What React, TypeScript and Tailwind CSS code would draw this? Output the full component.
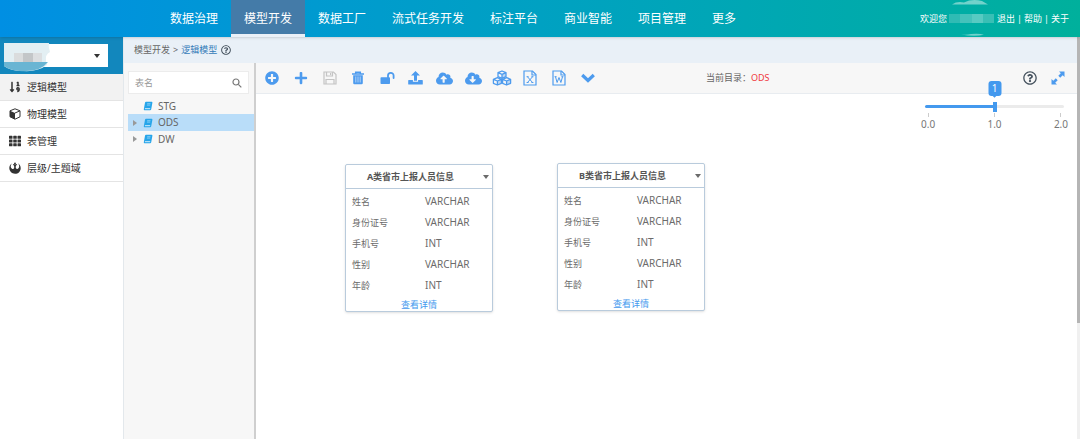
import React, { useState } from 'react';
import {
  FaCloudDownloadAlt,
  FaCloudUploadAlt,
  FaPlus,
  FaPlusCircle,
  FaRebel,
  FaRegQuestionCircle,
  FaSortNumericDown,
  FaTh,
} from 'react-icons/fa';

const navItems = ['数据治理', '模型开发', '数据工厂', '流式任务开发', '标注平台', '商业智能', '项目管理', '更多'];

const menuItems = [
  { label: '逻辑模型', icon: <FaSortNumericDown size={12} /> },
  { label: '物理模型', icon: <CubeIcon /> },
  { label: '表管理', icon: <FaTh size={12} /> },
  { label: '层级/主题域', icon: <FaRebel size={12} /> },
];

const treeItems = [
  { label: 'STG', expandable: false },
  { label: 'ODS', expandable: true },
  { label: 'DW', expandable: true },
];

const fields = [
  { name: '姓名', type: 'VARCHAR' },
  { name: '身份证号', type: 'VARCHAR' },
  { name: '手机号', type: 'INT' },
  { name: '性别', type: 'VARCHAR' },
  { name: '年龄', type: 'INT' },
];

function CubeIcon() {
  return (
    <svg viewBox="0 0 12 12" className="size-[12px]" strokeLinejoin="round">
      <path d="M6 .8l5 2v6L6 11.200l-5-2.400v-6z" fill="#fff" stroke="currentColor" strokeWidth="1" />
      <path d="M1 2.800l5 2.200v6.200L1 8.800z" fill="currentColor" />
      <path d="M6 5l5-2.200" stroke="currentColor" strokeWidth="1" />
    </svg>
  );
}

function SaveIcon() {
  return (
    <svg viewBox="0 0 14 14" className="size-[14px]" fill="none" stroke="currentColor" strokeWidth="1.2">
      <path d="M1 1h9.5L13 3.5V13H1z" />
      <path d="M3.5 1v4h6V1M7.6 2v2M3 13V8.5h8V13" />
    </svg>
  );
}

function TrashIcon() {
  return (
    <svg viewBox="0 0 14 14" className="size-[14px]" fill="none" stroke="currentColor">
      <path d="M1 3h12M4.7 3V1.3h4.6V3" strokeWidth="1.5" />
      <path d="M2.2 4.3h9.6V12a1.2 1.2 0 0 1-1.2 1.2H3.4A1.2 1.2 0 0 1 2.2 12z" fill="currentColor" stroke="none" />
      <path d="M4.8 5.5v6M7 5.5v6M9.2 5.5v6" stroke="#c9e0fb" strokeWidth="0.8" />
    </svg>
  );
}

function UnlockIcon() {
  return (
    <svg viewBox="0 0 15 14" className="h-[14px] w-[15px]" fill="none">
      <rect x="0.5" y="6.2" width="9.5" height="6.8" rx="0.8" fill="currentColor" />
      <path d="M8 6.5V4.600a2.800 2.800 0 0 1 5.600 0V7" stroke="currentColor" strokeWidth="1.8" strokeLinecap="round" />
    </svg>
  );
}

function UploadIcon() {
  return (
    <svg viewBox="0 0 15 14" className="h-[14px] w-[15px]" fill="currentColor">
      <path d="M7.5 0l4.500 4.600H9V9.800H6V4.600H3z" />
      <path d="M.8 9h4.100v1.800h5.200V9h4.100a.6.6 0 0 1 .6.6v3.400a.6.6 0 0 1-.6.6H.8a.6.6 0 0 1-.6-.6V9.600A.6.6 0 0 1 .8 9z" />
    </svg>
  );
}

function CubesIcon() {
  return (
    <svg viewBox="0 0 20 16" className="h-[16px] w-[20px]" fill="none" stroke="currentColor" strokeWidth="1.3" strokeLinejoin="round">
      <path d="M10 1l4 1.700v4L10 8.400 6 6.700v-4zM6 2.700l4 1.700 4-1.700M10 4.400v4" />
      <path d="M5.400 7.600l4 1.700v4l-4 1.700-4-1.700v-4zM1.400 9.300l4 1.700 4-1.700M5.400 11v4" />
      <path d="M14.600 7.600l4 1.700v4l-4 1.700-4-1.700v-4zM10.600 9.300l4 1.700 4-1.700M14.600 11v4" />
      <path d="M10 4.400l4-1.700v4l-4 1.700zM5.400 11l4-1.700v4l-4 1.700zM14.600 11l4-1.700v4l-4 1.700z" fill="currentColor" fillOpacity="0.35" stroke="none" />
    </svg>
  );
}

function FileIcon({ mark }: { mark: 'excel' | 'word' }) {
  return (
    <svg viewBox="0 0 14 16" className="h-[16px] w-[14px]" fill="none" stroke="currentColor" strokeWidth="1.2">
      <path d="M1 1h8.500L13 4.500V15H1z" />
      <path d="M9 1v4h4" />
      {mark === 'excel' ? (
        <path d="M4.500 6.800l5 5.700M9.500 6.800l-5 5.700M3.600 6.700h2M8.400 6.700h2M3.600 12.500h2M8.400 12.500h2" strokeWidth="1" />
      ) : (
        <path d="M3.500 6.800l1.600 5.700L7 7.500l1.900 5 1.600-5.700M2.600 6.700h2M9.400 6.700h2" strokeWidth="1" />
      )}
    </svg>
  );
}

function ChevronIcon() {
  return (
    <svg viewBox="0 0 14 10" className="h-[10px] w-[14px]" fill="none" stroke="currentColor" strokeWidth="3.2">
      <path d="M1.200 2L7 7.500 12.800 2" />
    </svg>
  );
}

function ExpandIcon() {
  return (
    <svg viewBox="0 0 14 14" className="size-[14px]" fill="currentColor">
      <path d="M8 .5h5.500V6L11.700 4.200 9.200 6.700 7.300 4.800l2.500-2.500zM6 13.500H.5V8l1.800 1.800 2.500-2.500 1.900 1.900-2.500 2.500z" />
    </svg>
  );
}

function BookIcon() {
  return (
    <svg viewBox="0 0 10 10" className="size-[10px] shrink-0">
      <path d="M3 .8h5.700q.9 0 .7.900L8.200 8.300q-.2.900-1.100.9H1.600Q.6 9.200.8 8.200L2 1.700Q2.200.8 3 .8z" fill="#26a5ea" />
      <path d="M1.900 7.700h5.300" stroke="#fff" strokeWidth="0.8" />
      <path d="M4.200 2.700h3.300M3.900 4.100h3.300" stroke="#bfe6fb" strokeWidth="0.6" />
    </svg>
  );
}

function Caret() {
  return (
    <svg viewBox="0 0 6 4" className="h-[4px] w-[6px]" fill="currentColor">
      <path d="M0 0h6L3 4z" />
    </svg>
  );
}

const tools = [
  { label: '新增', icon: <FaPlusCircle size={14} /> },
  { label: '添加', icon: <FaPlus size={14} /> },
  { label: '保存', icon: <SaveIcon />, disabled: true },
  { label: '删除', icon: <TrashIcon /> },
  { label: '解锁', icon: <UnlockIcon /> },
  { label: '上传', icon: <UploadIcon /> },
  { label: '云上传', icon: <FaCloudUploadAlt size={17} /> },
  { label: '云下载', icon: <FaCloudDownloadAlt size={17} /> },
  { label: '模型', icon: <CubesIcon /> },
  { label: '导出Excel', icon: <FileIcon mark="excel" /> },
  { label: '导出Word', icon: <FileIcon mark="word" /> },
  { label: '展开', icon: <ChevronIcon /> },
];

function Header() {
  return (
    <header className="relative z-10 flex h-[37px] shrink-0 justify-between bg-linear-to-r from-[#008fe3] via-[#00a1c2] to-[#00b09c] text-white shadow-sm">
      <nav className="flex pl-[157px] text-[12px]">
        {navItems.map((item) => (
          <a
            key={item}
            href="#"
            className={
              item === '模型开发'
                ? 'flex items-center border-b-3 border-[#eaf0f7] bg-[#447ba8] px-[13px] pt-[3px]'
                : 'flex items-center px-[13px]'
            }
          >
            {item}
          </a>
        ))}
      </nav>
      <div className="relative flex items-center gap-[2px] pr-[11px] text-[9px]">
        <span>欢迎您</span>
        <span className="mr-px flex h-[9px] w-[45px]">
          <span className="flex-1 bg-[#2fbbb4]" />
          <span className="flex-1 bg-[#45c2bb]" />
          <span className="flex-1 bg-[#58cac2]" />
          <span className="flex-1 bg-[#39bfb5]" />
        </span>
        <a href="#">退出</a>|<a href="#">帮助</a>|<a href="#">关于</a>
        <svg viewBox="0 0 38 37" className="absolute top-0 left-[32px] h-[37px] w-[38px]" fill="#72d2cb">
          <path d="M0 4.500Q5 1 12 2.500 20-1.500 30 1l6 3.500z" />
          <path d="M9 34.500q6 .5 10-.5 8-1 13 .8-10 2-23-.3z" />
        </svg>
      </div>
    </header>
  );
}

function Sidebar() {
  return (
    <aside className="w-[123px] shrink-0 bg-white">
      <div className="relative bg-[#1287bd] px-[5px] py-[7px]">
        <select aria-label="项目" className="block h-[23px] w-[103px] appearance-none bg-white text-[9px]" />
        <span className="pointer-events-none absolute top-[17px] right-[23px] text-[#333]">
          <Caret />
        </span>
        <svg viewBox="0 0 46 29" className="pointer-events-none absolute top-[6px] left-[4px] h-[29px] w-[46px]">
          <path d="M0 0h45q-1 4 1 9-5 2-4 10 2 1 1 3-9 7-24 6Q6 28 0 23z" fill="#e3eff3" />
          <path d="M0 19h44q-7 9-22 9Q8 29 0 23z" fill="#69b5d3" />
          <rect x="10" y="10" width="9" height="9" fill="#dadcdd" />
          <rect x="19" y="10" width="10" height="9" fill="#c3c6c8" />
          <rect x="29" y="10" width="9" height="9" fill="#dcdee0" />
        </svg>
      </div>
      <ul className="text-[10px] text-[#333]">
        {menuItems.map((item, i) => (
          <li key={item.label} className="border-b border-[#e4e4e4]">
            <a
              href="#"
              className={
                i === 0
                  ? 'flex h-[26px] items-center gap-[6px] bg-[#f2f2f2] pl-[9px]'
                  : 'flex h-[26px] items-center gap-[6px] pl-[9px]'
              }
            >
              {item.icon}
              {item.label}
            </a>
          </li>
        ))}
      </ul>
    </aside>
  );
}

function TreePanel() {
  return (
    <div className="w-[132px] shrink-0 border-r-2 border-[#cfcfcf] bg-[#f7f7f7] pt-[8px] pl-[4px]">
      <div className="mr-[5px] flex h-[23px] items-center border border-[#ececec] bg-white px-[6px]">
        <input
          aria-label="表名"
          placeholder="表名"
          className="w-0 flex-1 text-[9px] outline-none placeholder:text-[#999]"
        />
        <svg viewBox="0 0 10 10" className="size-[10px]" fill="none" stroke="#777" strokeWidth="1.2">
          <circle cx="4" cy="4" r="3" />
          <path d="M6.300 6.300l3 3" />
        </svg>
      </div>
      <ul className="mt-[4px] text-[10px] text-[#666]">
        {treeItems.map((item) => (
          <li key={item.label}>
            <button
              type="button"
              className={
                item.label === 'ODS'
                  ? 'flex h-[17px] w-full items-center bg-[#b9ddf9] pl-[5px]'
                  : 'flex h-[16px] w-full items-center pl-[5px]'
              }
            >
              <span className="w-[10px] text-[#999]">
                {item.expandable && (
                  <svg viewBox="0 0 4 6" className="h-[6px] w-[4px]" fill="currentColor">
                    <path d="M0 0l4 3-4 3z" />
                  </svg>
                )}
              </span>
              <BookIcon />
              <span className="pl-[5px]">{item.label}</span>
            </button>
          </li>
        ))}
      </ul>
    </div>
  );
}

function Toolbar() {
  return (
    <div className="flex h-[31px] items-center border-b border-[#e8ecf0] bg-[#f7f7f7] pr-[12px] pl-[2px] text-[#4d9bee]">
      <div className="flex h-full w-[344px] shrink-0">
        {tools.map((tool) => (
          <button
            key={tool.label}
            type="button"
            aria-label={tool.label}
            disabled={tool.disabled}
            className="flex flex-1 items-center justify-center disabled:text-[#c4c4c4]"
          >
            {tool.icon}
          </button>
        ))}
      </div>
      <p className="ml-[104px] text-[9px] whitespace-nowrap text-[#666]">
        当前目录：<span className="text-[#f0383d]">ODS</span>
      </p>
      <div className="ml-auto flex items-center gap-[14px]">
        <button type="button" aria-label="帮助" className="text-[#45525e]">
          <FaRegQuestionCircle size={14} />
        </button>
        <button type="button" aria-label="全屏">
          <ExpandIcon />
        </button>
      </div>
    </div>
  );
}

function ZoomSlider() {
  const [value, setValue] = useState(1);
  const percent = (value / 2) * 100;

  return (
    <div className="absolute top-[-13px] right-[9px] w-[147px] text-[10px] text-[#777]">
      <div className="relative mx-[4px] h-[30px]">
        <output
          htmlFor="zoom"
          className="absolute top-0 flex h-[15px] w-[13px] -translate-x-1/2 items-center justify-center rounded-[3px] bg-[#4499ee] text-white"
          style={{ left: `${percent}%` }}
        >
          {value}
          <span className="absolute -bottom-px size-[4px] rotate-45 bg-[#4499ee]" />
        </output>
        <input
          id="zoom"
          type="range"
          min="0"
          max="2"
          step="0.1"
          value={value}
          aria-label="缩放"
          onChange={(e) => setValue(Number(e.target.value))}
          className="absolute top-[24px] left-0 h-[3px] w-full appearance-none rounded-full [&::-webkit-slider-thumb]:h-[10px] [&::-webkit-slider-thumb]:w-[4px] [&::-webkit-slider-thumb]:appearance-none [&::-webkit-slider-thumb]:bg-[#4499ee]"
          style={{ background: `linear-gradient(to right, #4499ee ${percent}%, #ebebeb ${percent}%)` }}
        />
      </div>
      <div className="flex justify-between">
        {['0.0', '1.0', '2.0'].map((mark) => (
          <span key={mark} className="flex flex-col items-center leading-[14px]">
            <span className="mt-[2px] h-[4px] w-px bg-[#ccc]" />
            {mark}
          </span>
        ))}
      </div>
    </div>
  );
}

function TableCard({ title, className }: { title: string; className: string }) {
  return (
    <section className={`absolute w-[148px] rounded-[2px] border border-[#b9cbdc] bg-white text-[#6b6b6b] shadow-sm ${className}`}>
      <div className="flex h-[24px] items-center border-b border-[#b9cbdc] pr-[3px]">
        <h2 className="flex-1 text-center text-[9px] font-bold text-[#555]">{title}</h2>
        <button type="button" aria-label="菜单" className="flex w-[14px] justify-end">
          <Caret />
        </button>
      </div>
      <table className="mt-[2px] w-full">
        <tbody>
          {fields.map((field) => (
            <tr key={field.name} className="h-[21px]">
              <td className="w-[79px] p-0 pl-[6px] text-[9px]">{field.name}</td>
              <td className="p-0 text-[10px]">{field.type}</td>
            </tr>
          ))}
        </tbody>
      </table>
      <a href="#" className="mt-[2px] block h-[13px] text-center text-[9px] leading-[13px] text-[#4499ee]">
        查看详情
      </a>
    </section>
  );
}

export default function App() {
  return (
    <div className="flex min-h-screen flex-col bg-white font-['Noto_Sans','Noto_Sans_CJK_SC',sans-serif]">
      <Header />
      <div className="flex flex-1">
        <Sidebar />
        <div className="flex min-w-0 flex-1 flex-col border-l border-[#e3e8ec]">
          <div className="flex h-[26px] items-center gap-[3px] bg-[#e9f0f7] pl-[10px] text-[9px] text-[#666]">
            <a href="#">模型开发</a>
            <span>&gt;</span>
            <a href="#" className="text-[#337ab7]">逻辑模型</a>
            <FaRegQuestionCircle size={10} className="ml-px text-[#45525e]" />
          </div>
          <div className="flex flex-1">
            <TreePanel />
            <main className="flex min-w-0 flex-1 flex-col">
              <Toolbar />
              <div className="relative flex-1">
                <ZoomSlider />
                <TableCard title="A类省市上报人员信息" className="top-[70px] left-[89px]" />
                <TableCard title="B类省市上报人员信息" className="top-[69px] left-[301px]" />
              </div>
            </main>
          </div>
        </div>
        <div className="w-[3px] shrink-0 bg-[#f0f0f0]">
          <div className="h-[286px] bg-[#b5b5b5]" />
        </div>
      </div>
    </div>
  );
}
